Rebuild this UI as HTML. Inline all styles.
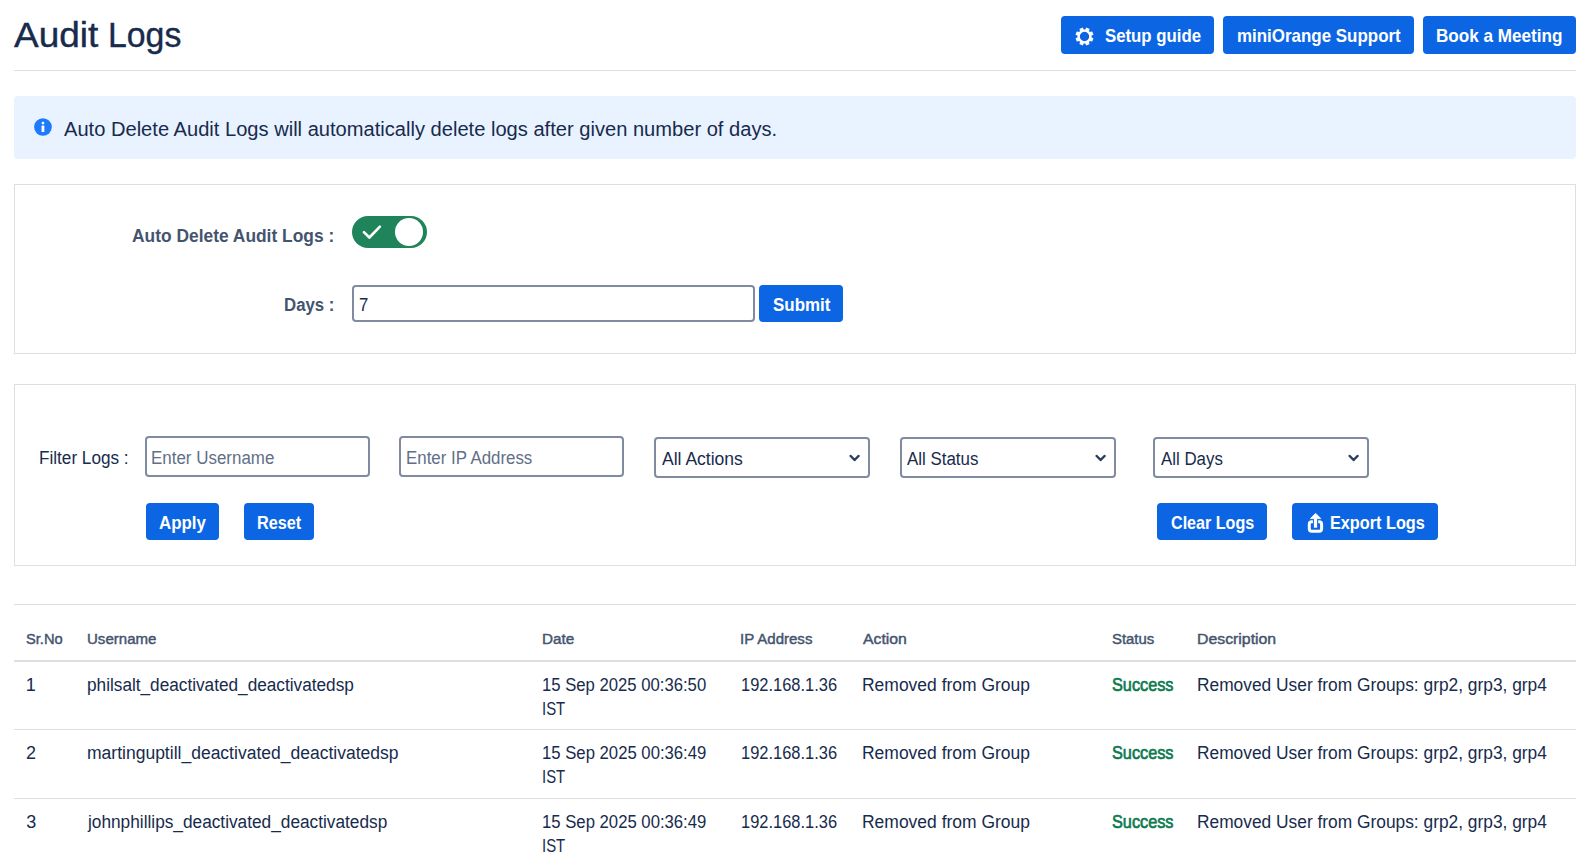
<!DOCTYPE html>
<html><head><meta charset="utf-8">
<style>
*{box-sizing:border-box;margin:0;padding:0}
html,body{width:1587px;height:852px;overflow:hidden;background:#fff}
body{font-family:"Liberation Sans",sans-serif;color:#172b4d;position:relative}
.a{position:absolute}
.t{position:absolute;white-space:nowrap;line-height:1;transform-origin:0 0}
.btn{position:absolute;background:#0c66e4;border-radius:4px}
.card{position:absolute;border:1px solid #dcdfe4;background:#fff}
.inp{position:absolute;border:2px solid #808b9f;border-radius:4px;background:#fff}
.hl{position:absolute;background:#dcdfe4;height:1px}
</style></head><body>
<div class="t" style="left:14.00px;top:18.00px;font-size:35.8px;color:#172b4d;transform:scaleX(1.0336);-webkit-text-stroke:0.4px #172b4d;">Audit</div>
<div class="t" style="left:108.29px;top:18.00px;font-size:35.8px;color:#172b4d;transform:scaleX(0.9447);-webkit-text-stroke:0.4px #172b4d;">Logs</div>
<div class="btn" style="left:1061px;top:16px;width:153px;height:38px"></div>
<svg class="a" style="left:1075px;top:26.5px" width="19" height="19" viewBox="-9.5 -9.5 19 19"><g fill="#fff"><rect x="-1.9" y="-9" width="3.8" height="4" rx="0.6" transform="rotate(22.5)"/><rect x="-1.9" y="-9" width="3.8" height="4" rx="0.6" transform="rotate(67.5)"/><rect x="-1.9" y="-9" width="3.8" height="4" rx="0.6" transform="rotate(112.5)"/><rect x="-1.9" y="-9" width="3.8" height="4" rx="0.6" transform="rotate(157.5)"/><rect x="-1.9" y="-9" width="3.8" height="4" rx="0.6" transform="rotate(202.5)"/><rect x="-1.9" y="-9" width="3.8" height="4" rx="0.6" transform="rotate(247.5)"/><rect x="-1.9" y="-9" width="3.8" height="4" rx="0.6" transform="rotate(292.5)"/><rect x="-1.9" y="-9" width="3.8" height="4" rx="0.6" transform="rotate(337.5)"/></g><circle r="5.9" fill="none" stroke="#fff" stroke-width="2.4"/></svg>
<div class="t" style="left:1104.50px;top:28.00px;font-size:17.8px;font-weight:bold;color:#fff;transform:scaleX(0.9438);">Setup guide</div>
<div class="btn" style="left:1223px;top:16px;width:191px;height:38px"></div>
<div class="t" style="left:1236.50px;top:28.00px;font-size:17.8px;font-weight:bold;color:#fff;transform:scaleX(0.9525);">miniOrange Support</div>
<div class="btn" style="left:1423px;top:16px;width:153px;height:38px"></div>
<div class="t" style="left:1436.49px;top:28.00px;font-size:17.8px;font-weight:bold;color:#fff;transform:scaleX(0.9626);">Book a Meeting</div>
<div class="hl" style="left:14px;top:70px;width:1562px"></div>
<div class="a" style="left:14px;top:96px;width:1562px;height:63px;background:#e9f2ff;border-radius:4px"></div>
<svg class="a" style="left:33.5px;top:118px" width="18" height="18" viewBox="0 0 18 18"><circle cx="8.95" cy="9" r="8.85" fill="#1d7afc"/><rect x="7.55" y="7.6" width="2.8" height="6.4" rx="0.6" fill="#fff"/><circle cx="8.95" cy="5.1" r="1.4" fill="#fff"/></svg>
<div class="t" style="left:64.20px;top:120.00px;font-size:19.6px;color:#172b4d;transform:scaleX(1.0262);">Auto Delete Audit Logs will automatically delete logs after given number of days.</div>
<div class="card" style="left:14px;top:184px;width:1562px;height:170px"></div>
<div class="t" style="left:132.17px;top:227.00px;font-size:18px;font-weight:bold;color:#44546f;transform:scaleX(0.9662);">Auto Delete Audit Logs :</div>
<div class="a" style="left:352px;top:216px;width:75px;height:32px;border-radius:16px;background:#1f845a"></div>
<div class="a" style="left:395px;top:218px;width:28px;height:28px;border-radius:50%;background:#fff"></div>
<svg class="a" style="left:352px;top:210px" width="40" height="40"><polyline points="11.9,22.1 17.4,27.5 27.9,16.7" fill="none" stroke="#fff" stroke-width="2.6" stroke-linecap="round" stroke-linejoin="round"/></svg>
<div class="t" style="left:283.91px;top:296.00px;font-size:18px;font-weight:bold;color:#44546f;transform:scaleX(0.9331);">Days :</div>
<div class="inp" style="left:352px;top:285px;width:403px;height:37px"></div>
<div class="t" style="left:359.16px;top:297.00px;font-size:17.5px;color:#172b4d;transform:scaleX(0.9545);">7</div>
<div class="btn" style="left:759px;top:285px;width:84px;height:37px"></div>
<div class="t" style="left:772.79px;top:297.00px;font-size:17.8px;font-weight:bold;color:#fff;transform:scaleX(0.9523);">Submit</div>
<div class="card" style="left:14px;top:384px;width:1562px;height:182px"></div>
<div class="t" style="left:39.23px;top:449.00px;font-size:18px;color:#172b4d;transform:scaleX(0.9527);">Filter Logs :</div>
<div class="inp" style="left:145px;top:436px;width:225px;height:41px"></div>
<div class="t" style="left:151.14px;top:450.00px;font-size:17.6px;color:#626f86;transform:scaleX(0.9632);">Enter Username</div>
<div class="inp" style="left:399px;top:436px;width:225px;height:41px"></div>
<div class="t" style="left:406.45px;top:450.00px;font-size:17.6px;color:#626f86;transform:scaleX(0.9590);">Enter IP Address</div>
<div class="inp" style="left:654px;top:437px;width:216px;height:41px"></div>
<div class="t" style="left:662.00px;top:450.00px;font-size:18px;color:#172b4d;transform:scaleX(0.9740);">All Actions</div>
<svg class="a" style="left:848px;top:454px" width="12" height="9"><polyline points="2.7,2 6.6,6 10.5,2" fill="none" stroke="#2c3e5d" stroke-width="2.5" stroke-linecap="round" stroke-linejoin="round"/></svg>
<div class="inp" style="left:900px;top:437px;width:216px;height:41px"></div>
<div class="t" style="left:907.20px;top:450.00px;font-size:18px;color:#172b4d;transform:scaleX(0.9387);">All Status</div>
<svg class="a" style="left:1094px;top:454px" width="12" height="9"><polyline points="2.7,2 6.6,6 10.5,2" fill="none" stroke="#2c3e5d" stroke-width="2.5" stroke-linecap="round" stroke-linejoin="round"/></svg>
<div class="inp" style="left:1153px;top:437px;width:216px;height:41px"></div>
<div class="t" style="left:1160.80px;top:450.00px;font-size:18px;color:#172b4d;transform:scaleX(0.9369);">All Days</div>
<svg class="a" style="left:1347px;top:454px" width="12" height="9"><polyline points="2.7,2 6.6,6 10.5,2" fill="none" stroke="#2c3e5d" stroke-width="2.5" stroke-linecap="round" stroke-linejoin="round"/></svg>
<div class="btn" style="left:146px;top:503px;width:73px;height:37px"></div>
<div class="t" style="left:159.18px;top:515.00px;font-size:17.8px;font-weight:bold;color:#fff;transform:scaleX(0.9496);">Apply</div>
<div class="btn" style="left:244px;top:503px;width:70px;height:37px"></div>
<div class="t" style="left:256.94px;top:515.00px;font-size:17.8px;font-weight:bold;color:#fff;transform:scaleX(0.9133);">Reset</div>
<div class="btn" style="left:1157px;top:503px;width:110px;height:37px"></div>
<div class="t" style="left:1170.55px;top:515.00px;font-size:17.8px;font-weight:bold;color:#fff;transform:scaleX(0.9059);">Clear Logs</div>
<div class="btn" style="left:1292px;top:503px;width:146px;height:37px"></div>
<svg class="a" style="left:1302px;top:508px" width="28" height="30" viewBox="0 0 28 30"><path d="M10.9,13.8 H9.8 Q7.3,13.8 7.3,16.3 V20.8 Q7.3,23.3 9.8,23.3 H17.1 Q19.6,23.3 19.6,20.8 V16.3 Q19.6,13.8 17.1,13.8 H16.2" fill="none" stroke="#fff" stroke-width="3"/><rect x="11.9" y="9.5" width="3.2" height="10.2" fill="#fff"/><polygon points="8.4,10.6 13.6,5.3 18.8,10.6" fill="#fff" stroke="#fff" stroke-width="0.8" stroke-linejoin="round"/></svg>
<div class="t" style="left:1329.74px;top:515.00px;font-size:17.8px;font-weight:bold;color:#fff;transform:scaleX(0.9138);">Export Logs</div>
<div class="hl" style="left:14px;top:604px;width:1562px"></div>
<div class="a" style="left:14px;top:660px;width:1562px;height:2px;background:#dcdfe4"></div>
<div class="hl" style="left:14px;top:729px;width:1562px"></div>
<div class="hl" style="left:14px;top:798px;width:1562px"></div>
<div class="t" style="left:25.94px;top:631.00px;font-size:15.2px;color:#44546f;transform:scaleX(0.9644);-webkit-text-stroke:0.45px #44546f;">Sr.No</div>
<div class="t" style="left:86.87px;top:631.00px;font-size:15.2px;color:#44546f;transform:scaleX(0.9905);-webkit-text-stroke:0.45px #44546f;">Username</div>
<div class="t" style="left:542.48px;top:631.00px;font-size:15.2px;color:#44546f;transform:scaleX(1.0042);-webkit-text-stroke:0.45px #44546f;">Date</div>
<div class="t" style="left:740.35px;top:631.00px;font-size:15.2px;color:#44546f;transform:scaleX(0.9893);-webkit-text-stroke:0.45px #44546f;">IP Address</div>
<div class="t" style="left:863.10px;top:631.00px;font-size:15.2px;color:#44546f;transform:scaleX(1.0395);-webkit-text-stroke:0.45px #44546f;">Action</div>
<div class="t" style="left:1111.93px;top:631.00px;font-size:15.2px;color:#44546f;transform:scaleX(0.9815);-webkit-text-stroke:0.45px #44546f;">Status</div>
<div class="t" style="left:1197.33px;top:631.00px;font-size:15.2px;color:#44546f;transform:scaleX(1.0421);-webkit-text-stroke:0.45px #44546f;">Description</div>
<div class="t" style="left:25.65px;top:676.00px;font-size:18px;color:#172b4d;">1</div>
<div class="t" style="left:86.88px;top:676.00px;font-size:18px;color:#172b4d;transform:scaleX(0.9557);">philsalt_deactivated_deactivatedsp</div>
<div class="t" style="left:542.45px;top:676.00px;font-size:18px;color:#172b4d;transform:scaleX(0.9267);">15 Sep 2025 00:36:50</div>
<div class="t" style="left:542.35px;top:700.00px;font-size:18px;color:#172b4d;transform:scaleX(0.8304);">IST</div>
<div class="t" style="left:741.47px;top:676.00px;font-size:18px;color:#172b4d;transform:scaleX(0.9141);">192.168.1.36</div>
<div class="t" style="left:861.70px;top:676.00px;font-size:18px;color:#172b4d;transform:scaleX(0.9707);">Removed from Group</div>
<div class="t" style="left:1112.17px;top:677.00px;font-size:17.8px;color:#0b7a4f;transform:scaleX(0.9141);-webkit-text-stroke:0.65px #0b7a4f;">Success</div>
<div class="t" style="left:1197.11px;top:676.00px;font-size:18px;color:#172b4d;transform:scaleX(0.9635);">Removed User from Groups: grp2, grp3, grp4</div>
<div class="t" style="left:26.10px;top:744.00px;font-size:18px;color:#172b4d;">2</div>
<div class="t" style="left:86.86px;top:744.00px;font-size:18px;color:#172b4d;transform:scaleX(0.9729);">martinguptill_deactivated_deactivatedsp</div>
<div class="t" style="left:542.45px;top:744.00px;font-size:18px;color:#172b4d;transform:scaleX(0.9276);">15 Sep 2025 00:36:49</div>
<div class="t" style="left:542.35px;top:768.00px;font-size:18px;color:#172b4d;transform:scaleX(0.8304);">IST</div>
<div class="t" style="left:741.47px;top:744.00px;font-size:18px;color:#172b4d;transform:scaleX(0.9141);">192.168.1.36</div>
<div class="t" style="left:861.70px;top:744.00px;font-size:18px;color:#172b4d;transform:scaleX(0.9707);">Removed from Group</div>
<div class="t" style="left:1112.17px;top:745.00px;font-size:17.8px;color:#0b7a4f;transform:scaleX(0.9141);-webkit-text-stroke:0.65px #0b7a4f;">Success</div>
<div class="t" style="left:1197.11px;top:744.00px;font-size:18px;color:#172b4d;transform:scaleX(0.9635);">Removed User from Groups: grp2, grp3, grp4</div>
<div class="t" style="left:26.28px;top:813.00px;font-size:18px;color:#172b4d;">3</div>
<div class="t" style="left:88.43px;top:813.00px;font-size:18px;color:#172b4d;transform:scaleX(0.9585);">johnphillips_deactivated_deactivatedsp</div>
<div class="t" style="left:542.45px;top:813.00px;font-size:18px;color:#172b4d;transform:scaleX(0.9276);">15 Sep 2025 00:36:49</div>
<div class="t" style="left:542.35px;top:837.00px;font-size:18px;color:#172b4d;transform:scaleX(0.8304);">IST</div>
<div class="t" style="left:741.47px;top:813.00px;font-size:18px;color:#172b4d;transform:scaleX(0.9141);">192.168.1.36</div>
<div class="t" style="left:861.70px;top:813.00px;font-size:18px;color:#172b4d;transform:scaleX(0.9707);">Removed from Group</div>
<div class="t" style="left:1112.17px;top:814.00px;font-size:17.8px;color:#0b7a4f;transform:scaleX(0.9141);-webkit-text-stroke:0.65px #0b7a4f;">Success</div>
<div class="t" style="left:1197.11px;top:813.00px;font-size:18px;color:#172b4d;transform:scaleX(0.9635);">Removed User from Groups: grp2, grp3, grp4</div>
</body></html>
